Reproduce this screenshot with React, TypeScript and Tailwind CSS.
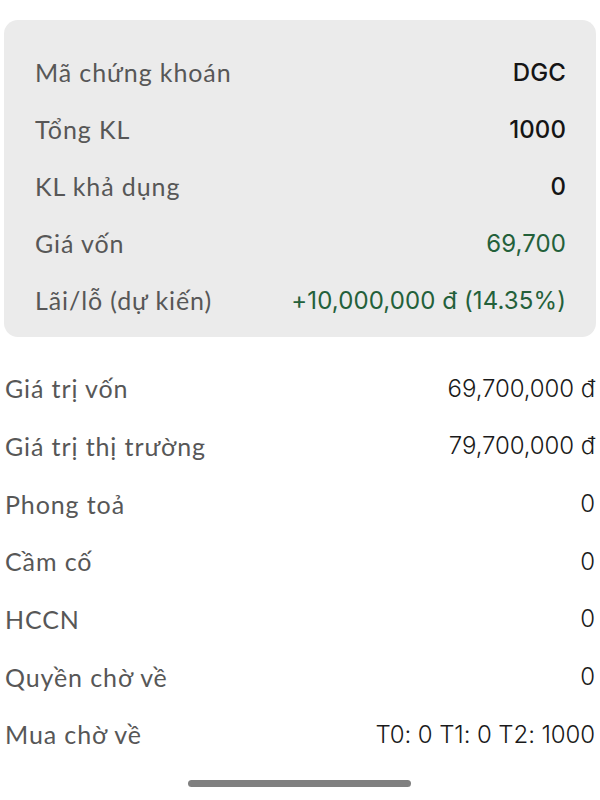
import React from "react";

const labelFont = { fontFamily: "Lato, 'Noto Sans', sans-serif" };
const valueFont = { fontFamily: "Inter, sans-serif" };

export default function App() {
  const top = [
    { l: "Mã chứng khoán", v: "DGC", c: "text-[#151515] font-medium" },
    { l: "Tổng KL", v: "1000", c: "text-[#151515] font-medium" },
    { l: "KL khả dụng", v: "0", c: "text-[#151515] font-medium" },
    { l: "Giá vốn", v: "69,700", c: "text-[#23603a]" },
    { l: "Lãi/lỗ (dự kiến)", v: "+10,000,000 đ (14.35%)", c: "text-[#23603a]" },
  ];
  const bottom = [
    { l: "Giá trị vốn", v: "69,700,000 đ" },
    { l: "Giá trị thị trường", v: "79,700,000 đ" },
    { l: "Phong toả", v: "0" },
    { l: "Cầm cố", v: "0" },
    { l: "HCCN", v: "0" },
    { l: "Quyền chờ về", v: "0" },
    { l: "Mua chờ về", v: "T0: 0 T1: 0 T2: 1000" },
  ];
  return (
    <div className="w-[600px] h-[800px] bg-white flex flex-col relative overflow-hidden">
      <div className="mt-[20px] mx-[4px] w-[592px] h-[317px] rounded-[14px] bg-[#ebebeb] pt-[24px] pl-[31px] pr-[30px] flex flex-col">
        {top.map((r) => (
          <div key={r.l} className="h-[57px] shrink-0 flex items-center justify-between">
            <span className="text-[25px] leading-none tracking-[0.9px] text-[#575757]" style={labelFont}>{r.l}</span>
            <span className={`text-[24px] leading-none tracking-[0.1px] ${r.c}`} style={valueFont}>{r.v}</span>
          </div>
        ))}
      </div>
      <div className="mt-[23px] pl-[5px] pr-[5px] flex flex-col">
        {bottom.map((r) => (
          <div key={r.l} className="h-[57.67px] shrink-0 flex items-center justify-between">
            <span className="text-[25px] leading-none tracking-[0.9px] text-[#575757]" style={labelFont}>{r.l}</span>
            <span className="text-[24px] leading-none tracking-[-0.1px] text-[#1a1a1a] font-light" style={valueFont}>{r.v}</span>
          </div>
        ))}
      </div>
      <div className="absolute left-[188px] top-[780px] w-[223px] h-[7px] rounded-full bg-[#808080]" />
    </div>
  );
}
